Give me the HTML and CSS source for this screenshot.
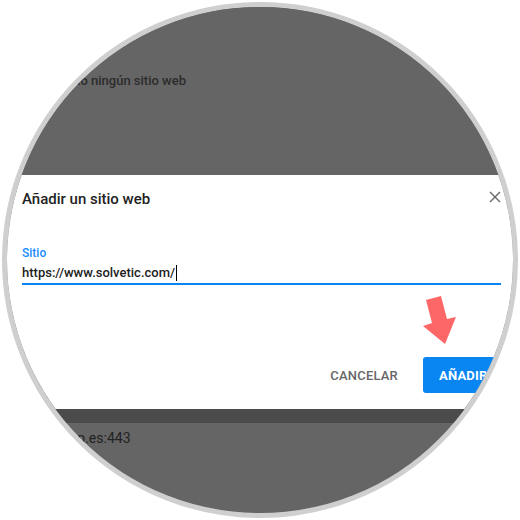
FILE: index.html
```html
<!DOCTYPE html>
<html lang="es">
<head>
    <meta charset="UTF-8">
    <meta name="viewport" content="width=device-width, initial-scale=1.0">
    <title>Añadir un sitio web</title>
    <link rel="stylesheet" href="styles.css">
</head>
<body>
    <div class="lens">
        <!-- Fondo oscurecido, parte de arriba -->
        <div class="backdrop-top">
            <p class="empty-text">No se ha añadido ningún sitio web</p>
        </div>

        <!-- Dialogo -->
        <div class="dialog">
            <div class="dialog-header">
                <h2>Añadir un sitio web</h2>
                <button class="close" aria-label="Cerrar">
                    <svg width="12" height="12" viewBox="0 0 12 12">
                        <path d="M1 1 L11 11 M11 1 L1 11" stroke="#666" stroke-width="1.4" fill="none"/>
                    </svg>
                </button>
            </div>
            <label class="field-label" for="site">Sitio</label>
            <div class="field">
                <span class="field-value">https://www.solvetic.com/</span><span class="caret"></span>
            </div>
            <div class="actions">
                <button class="btn-text">CANCELAR</button>
                <button class="btn-primary">AÑADIR</button>
            </div>
        </div>

        <!-- Fondo oscurecido, parte de abajo -->
        <div class="backdrop-bottom">
            <p class="row-text">https://www.wp.es:443</p>
        </div>
    </div>

    <svg class="arrow" width="520" height="520" viewBox="0 0 520 520">
        <polygon points="426,300 441,296 447,319 456,317 445,344 423,326 432,323" fill="#fe6767"/>
    </svg>
</body>
</html>
```

FILE: styles.css
```css
body {
    margin: 0;
    padding: 0;
    background-color: #fff;
    font-family: Roboto, "Liberation Sans", Arial, sans-serif;
    position: relative;
    width: 520px;
    height: 520px;
    overflow: hidden;
}
.lens {
    width: 506px;
    height: 506px;
    margin: 2px;
    border: 5px solid #cfcfcf;
    border-radius: 50%;
    overflow: hidden;
    background-color: #656565;
    display: flex;
    flex-direction: column;
}
.backdrop-top {
    height: 168px;
    flex-shrink: 0;
    background-color: #656565;
    padding-top: 64px;
    box-sizing: border-box;
}
.empty-text {
    margin: 0;
    font-size: 13px;
    line-height: 20px;
    font-weight: 500;
    color: #2c2c2c;
    text-indent: -20px;
}
.dialog {
    height: 234px;
    flex-shrink: 0;
    box-sizing: border-box;
    background-color: #fff;
    padding: 14px 12px 0 15px;
    display: flex;
    flex-direction: column;
}
.dialog-header {
    display: flex;
    align-items: center;
    justify-content: space-between;
    height: 20px;
}
.dialog-header h2 {
    margin: 0;
    font-size: 15px;
    line-height: 20px;
    font-weight: 500;
    color: #222;
}
.close {
    background: none;
    border: none;
    padding: 0;
    width: 12px;
    height: 12px;
    margin-top: -4px;
    cursor: pointer;
}
.close svg {
    display: block;
}
.field-label {
    margin-top: 36px;
    font-size: 12px;
    line-height: 16px;
    font-weight: 500;
    color: #1a8cff;
}
.field {
    margin-top: 3px;
    padding-bottom: 1px;
    border-bottom: 2px solid #0b84f3;
    display: flex;
    align-items: center;
    height: 18px;
}
.field-value {
    font-size: 13px;
    line-height: 18px;
    font-weight: 500;
    color: #222;
}
.caret {
    width: 1px;
    height: 16px;
    margin-left: 1px;
    background-color: #000;
}
.actions {
    margin-top: 72px;
    display: flex;
    justify-content: flex-end;
    gap: 9px;
}
.btn-text,
.btn-primary {
    height: 36px;
    padding: 0 16px;
    border: none;
    border-radius: 3px;
    font-family: Roboto, "Liberation Sans", Arial, sans-serif;
    font-size: 13px;
    font-weight: 500;
    letter-spacing: 0.2px;
    cursor: pointer;
}
.btn-text {
    background: none;
    color: #666;
}
.btn-primary {
    width: 78px;
    background-color: #0a86f2;
    color: #fff;
    font-weight: 700;
    text-align: left;
}
.backdrop-bottom {
    flex: 1;
    border-top: 14px solid #4b4b4b;
    padding-top: 5px;
}
.row-text {
    margin: 0;
    font-size: 14px;
    line-height: 20px;
    color: #222;
    text-indent: -20px;
}
.arrow {
    position: absolute;
    left: 0;
    top: 0;
}
```
